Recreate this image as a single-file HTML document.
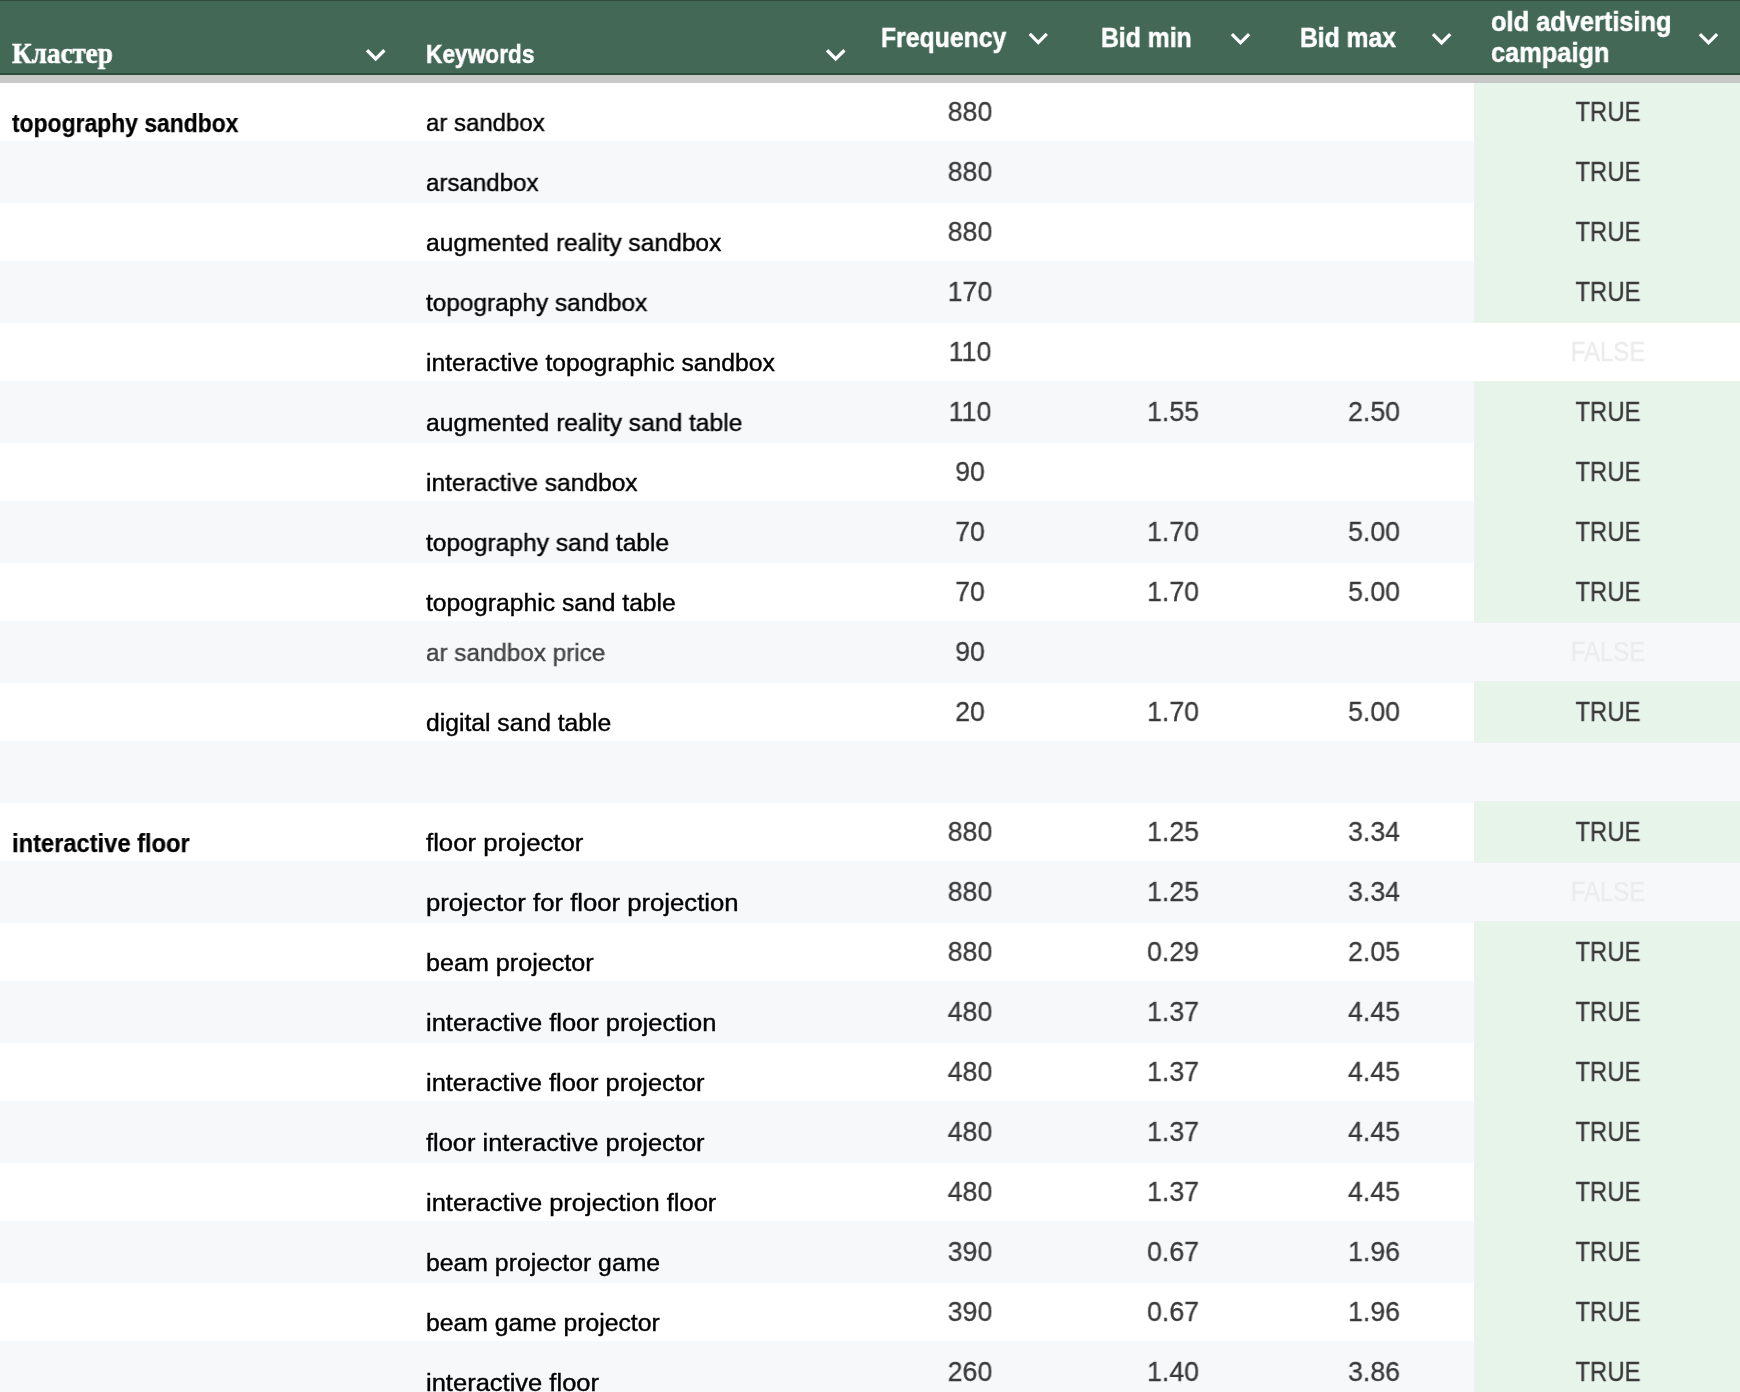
<!DOCTYPE html>
<html><head><meta charset="utf-8"><style>
html,body{margin:0;padding:0;}
body{width:1740px;height:1392px;overflow:hidden;position:relative;background:#fff;font-family:"Liberation Sans",sans-serif;}
.g{position:absolute;left:0;width:1740px;height:62px;background:#f7f8fa;}
.gr{position:absolute;left:1474px;width:266px;height:62px;background:#e6f4ea;}
.t{position:absolute;white-space:pre;line-height:100px;will-change:transform;}
.kw,.cl{color:#000;-webkit-text-stroke:0.4px #000;}
.gray{-webkit-text-stroke:0.4px #434343 !important;}
.cl{font-weight:bold;-webkit-text-stroke:0.25px #000;}
.gray{color:#434343;}
.num{color:#3a3a3a;-webkit-text-stroke:0.3px #3a3a3a;}
.fls{color:#ececec;-webkit-text-stroke:0.4px #ececec;}
.hdr{position:absolute;left:0;top:0;width:1740px;height:83px;background:#c8c8c8;}
.hbg{position:absolute;left:0;top:0;width:1740px;height:75px;background:#436855;border-top:1px solid #2f4c3f;border-bottom:2px solid #2e4c3c;box-sizing:border-box;}
.hs{font-family:"Liberation Serif",serif;font-weight:bold;color:#fff;-webkit-text-stroke:0.6px #fff;}
.hb{font-weight:bold;color:#fff;-webkit-text-stroke:0.5px #fff;}
.ch{position:absolute;}
</style></head><body>
<div class="g" style="top:141px"></div><div class="g" style="top:261px"></div><div class="g" style="top:381px"></div><div class="g" style="top:501px"></div><div class="g" style="top:621px"></div><div class="g" style="top:741px"></div><div class="g" style="top:861px"></div><div class="g" style="top:981px"></div><div class="g" style="top:1101px"></div><div class="g" style="top:1221px"></div><div class="g" style="top:1341px"></div>
<div class="gr" style="top:81px"></div><div class="gr" style="top:141px"></div><div class="gr" style="top:201px"></div><div class="gr" style="top:261px"></div><div class="gr" style="top:381px"></div><div class="gr" style="top:441px"></div><div class="gr" style="top:501px"></div><div class="gr" style="top:561px"></div><div class="gr" style="top:681px"></div><div class="gr" style="top:801px"></div><div class="gr" style="top:921px"></div><div class="gr" style="top:981px"></div><div class="gr" style="top:1041px"></div><div class="gr" style="top:1101px"></div><div class="gr" style="top:1161px"></div><div class="gr" style="top:1221px"></div><div class="gr" style="top:1281px"></div><div class="gr" style="top:1341px"></div>
<div class="t cl" style="left:11.50px;top:72.64px;font-size:25px;transform:scaleX(0.916);transform-origin:0 0;">topography sandbox</div><div class="t kw" style="left:425.60px;top:72.74px;font-size:24.7px;transform:scaleX(0.9721);transform-origin:0 0;">ar sandbox</div><div class="t num" style="left:770.00px;top:61.77px;width:400px;text-align:center;font-size:27.5px;transform:scaleX(0.97);transform-origin:50% 0;">880</div><div class="t num" style="left:1408.00px;top:61.77px;width:400px;text-align:center;font-size:27.5px;transform:scaleX(0.87);transform-origin:50% 0;">TRUE</div><div class="t kw" style="left:425.60px;top:132.74px;font-size:24.7px;transform:scaleX(0.9756);transform-origin:0 0;">arsandbox</div><div class="t num" style="left:770.00px;top:121.77px;width:400px;text-align:center;font-size:27.5px;transform:scaleX(0.97);transform-origin:50% 0;">880</div><div class="t num" style="left:1408.00px;top:121.77px;width:400px;text-align:center;font-size:27.5px;transform:scaleX(0.87);transform-origin:50% 0;">TRUE</div><div class="t kw" style="left:425.60px;top:192.74px;font-size:24.7px;transform:scaleX(0.9966);transform-origin:0 0;">augmented reality sandbox</div><div class="t num" style="left:770.00px;top:181.77px;width:400px;text-align:center;font-size:27.5px;transform:scaleX(0.97);transform-origin:50% 0;">880</div><div class="t num" style="left:1408.00px;top:181.77px;width:400px;text-align:center;font-size:27.5px;transform:scaleX(0.87);transform-origin:50% 0;">TRUE</div><div class="t kw" style="left:425.60px;top:252.74px;font-size:24.7px;transform:scaleX(0.9883);transform-origin:0 0;">topography sandbox</div><div class="t num" style="left:770.00px;top:241.77px;width:400px;text-align:center;font-size:27.5px;transform:scaleX(0.97);transform-origin:50% 0;">170</div><div class="t num" style="left:1408.00px;top:241.77px;width:400px;text-align:center;font-size:27.5px;transform:scaleX(0.87);transform-origin:50% 0;">TRUE</div><div class="t kw" style="left:425.60px;top:312.74px;font-size:24.7px;transform:scaleX(1.0006);transform-origin:0 0;">interactive topographic sandbox</div><div class="t num" style="left:770.00px;top:301.77px;width:400px;text-align:center;font-size:27.5px;transform:scaleX(0.97);transform-origin:50% 0;">110</div><div class="t num fls" style="left:1408.00px;top:301.77px;width:400px;text-align:center;font-size:27.5px;transform:scaleX(0.87);transform-origin:50% 0;">FALSE</div><div class="t kw" style="left:425.60px;top:372.74px;font-size:24.7px;transform:scaleX(0.9982);transform-origin:0 0;">augmented reality sand table</div><div class="t num" style="left:770.00px;top:361.77px;width:400px;text-align:center;font-size:27.5px;transform:scaleX(0.97);transform-origin:50% 0;">110</div><div class="t num" style="left:972.60px;top:361.77px;width:400px;text-align:center;font-size:27.5px;transform:scaleX(0.97);transform-origin:50% 0;">1.55</div><div class="t num" style="left:1173.90px;top:361.77px;width:400px;text-align:center;font-size:27.5px;transform:scaleX(0.97);transform-origin:50% 0;">2.50</div><div class="t num" style="left:1408.00px;top:361.77px;width:400px;text-align:center;font-size:27.5px;transform:scaleX(0.87);transform-origin:50% 0;">TRUE</div><div class="t kw" style="left:425.60px;top:432.74px;font-size:24.7px;transform:scaleX(0.9944);transform-origin:0 0;">interactive sandbox</div><div class="t num" style="left:770.00px;top:421.77px;width:400px;text-align:center;font-size:27.5px;transform:scaleX(0.97);transform-origin:50% 0;">90</div><div class="t num" style="left:1408.00px;top:421.77px;width:400px;text-align:center;font-size:27.5px;transform:scaleX(0.87);transform-origin:50% 0;">TRUE</div><div class="t kw" style="left:425.60px;top:492.74px;font-size:24.7px;transform:scaleX(0.9951);transform-origin:0 0;">topography sand table</div><div class="t num" style="left:770.00px;top:481.77px;width:400px;text-align:center;font-size:27.5px;transform:scaleX(0.97);transform-origin:50% 0;">70</div><div class="t num" style="left:972.60px;top:481.77px;width:400px;text-align:center;font-size:27.5px;transform:scaleX(0.97);transform-origin:50% 0;">1.70</div><div class="t num" style="left:1173.90px;top:481.77px;width:400px;text-align:center;font-size:27.5px;transform:scaleX(0.97);transform-origin:50% 0;">5.00</div><div class="t num" style="left:1408.00px;top:481.77px;width:400px;text-align:center;font-size:27.5px;transform:scaleX(0.87);transform-origin:50% 0;">TRUE</div><div class="t kw" style="left:425.60px;top:552.74px;font-size:24.7px;">topographic sand table</div><div class="t num" style="left:770.00px;top:541.77px;width:400px;text-align:center;font-size:27.5px;transform:scaleX(0.97);transform-origin:50% 0;">70</div><div class="t num" style="left:972.60px;top:541.77px;width:400px;text-align:center;font-size:27.5px;transform:scaleX(0.97);transform-origin:50% 0;">1.70</div><div class="t num" style="left:1173.90px;top:541.77px;width:400px;text-align:center;font-size:27.5px;transform:scaleX(0.97);transform-origin:50% 0;">5.00</div><div class="t num" style="left:1408.00px;top:541.77px;width:400px;text-align:center;font-size:27.5px;transform:scaleX(0.87);transform-origin:50% 0;">TRUE</div><div class="t kw gray" style="left:425.60px;top:602.74px;font-size:24.7px;transform:scaleX(0.9823);transform-origin:0 0;">ar sandbox price</div><div class="t num" style="left:770.00px;top:601.77px;width:400px;text-align:center;font-size:27.5px;transform:scaleX(0.97);transform-origin:50% 0;">90</div><div class="t num fls" style="left:1408.00px;top:601.77px;width:400px;text-align:center;font-size:27.5px;transform:scaleX(0.87);transform-origin:50% 0;">FALSE</div><div class="t kw" style="left:425.60px;top:672.74px;font-size:24.7px;transform:scaleX(0.9978);transform-origin:0 0;">digital sand table</div><div class="t num" style="left:770.00px;top:661.77px;width:400px;text-align:center;font-size:27.5px;transform:scaleX(0.97);transform-origin:50% 0;">20</div><div class="t num" style="left:972.60px;top:661.77px;width:400px;text-align:center;font-size:27.5px;transform:scaleX(0.97);transform-origin:50% 0;">1.70</div><div class="t num" style="left:1173.90px;top:661.77px;width:400px;text-align:center;font-size:27.5px;transform:scaleX(0.97);transform-origin:50% 0;">5.00</div><div class="t num" style="left:1408.00px;top:661.77px;width:400px;text-align:center;font-size:27.5px;transform:scaleX(0.87);transform-origin:50% 0;">TRUE</div><div class="t cl" style="left:11.50px;top:792.64px;font-size:25px;transform:scaleX(0.9477);transform-origin:0 0;">interactive floor</div><div class="t kw" style="left:425.60px;top:792.74px;font-size:24.7px;transform:scaleX(1.0426);transform-origin:0 0;">floor projector</div><div class="t num" style="left:770.00px;top:781.77px;width:400px;text-align:center;font-size:27.5px;transform:scaleX(0.97);transform-origin:50% 0;">880</div><div class="t num" style="left:972.60px;top:781.77px;width:400px;text-align:center;font-size:27.5px;transform:scaleX(0.97);transform-origin:50% 0;">1.25</div><div class="t num" style="left:1173.90px;top:781.77px;width:400px;text-align:center;font-size:27.5px;transform:scaleX(0.97);transform-origin:50% 0;">3.34</div><div class="t num" style="left:1408.00px;top:781.77px;width:400px;text-align:center;font-size:27.5px;transform:scaleX(0.87);transform-origin:50% 0;">TRUE</div><div class="t kw" style="left:425.60px;top:852.74px;font-size:24.7px;transform:scaleX(1.0401);transform-origin:0 0;">projector for floor projection</div><div class="t num" style="left:770.00px;top:841.77px;width:400px;text-align:center;font-size:27.5px;transform:scaleX(0.97);transform-origin:50% 0;">880</div><div class="t num" style="left:972.60px;top:841.77px;width:400px;text-align:center;font-size:27.5px;transform:scaleX(0.97);transform-origin:50% 0;">1.25</div><div class="t num" style="left:1173.90px;top:841.77px;width:400px;text-align:center;font-size:27.5px;transform:scaleX(0.97);transform-origin:50% 0;">3.34</div><div class="t num fls" style="left:1408.00px;top:841.77px;width:400px;text-align:center;font-size:27.5px;transform:scaleX(0.87);transform-origin:50% 0;">FALSE</div><div class="t kw" style="left:425.60px;top:912.74px;font-size:24.7px;transform:scaleX(1.0182);transform-origin:0 0;">beam projector</div><div class="t num" style="left:770.00px;top:901.77px;width:400px;text-align:center;font-size:27.5px;transform:scaleX(0.97);transform-origin:50% 0;">880</div><div class="t num" style="left:972.60px;top:901.77px;width:400px;text-align:center;font-size:27.5px;transform:scaleX(0.97);transform-origin:50% 0;">0.29</div><div class="t num" style="left:1173.90px;top:901.77px;width:400px;text-align:center;font-size:27.5px;transform:scaleX(0.97);transform-origin:50% 0;">2.05</div><div class="t num" style="left:1408.00px;top:901.77px;width:400px;text-align:center;font-size:27.5px;transform:scaleX(0.87);transform-origin:50% 0;">TRUE</div><div class="t kw" style="left:425.60px;top:972.74px;font-size:24.7px;transform:scaleX(1.0321);transform-origin:0 0;">interactive floor projection</div><div class="t num" style="left:770.00px;top:961.77px;width:400px;text-align:center;font-size:27.5px;transform:scaleX(0.97);transform-origin:50% 0;">480</div><div class="t num" style="left:972.60px;top:961.77px;width:400px;text-align:center;font-size:27.5px;transform:scaleX(0.97);transform-origin:50% 0;">1.37</div><div class="t num" style="left:1173.90px;top:961.77px;width:400px;text-align:center;font-size:27.5px;transform:scaleX(0.97);transform-origin:50% 0;">4.45</div><div class="t num" style="left:1408.00px;top:961.77px;width:400px;text-align:center;font-size:27.5px;transform:scaleX(0.87);transform-origin:50% 0;">TRUE</div><div class="t kw" style="left:425.60px;top:1032.74px;font-size:24.7px;transform:scaleX(1.0303);transform-origin:0 0;">interactive floor projector</div><div class="t num" style="left:770.00px;top:1021.77px;width:400px;text-align:center;font-size:27.5px;transform:scaleX(0.97);transform-origin:50% 0;">480</div><div class="t num" style="left:972.60px;top:1021.77px;width:400px;text-align:center;font-size:27.5px;transform:scaleX(0.97);transform-origin:50% 0;">1.37</div><div class="t num" style="left:1173.90px;top:1021.77px;width:400px;text-align:center;font-size:27.5px;transform:scaleX(0.97);transform-origin:50% 0;">4.45</div><div class="t num" style="left:1408.00px;top:1021.77px;width:400px;text-align:center;font-size:27.5px;transform:scaleX(0.87);transform-origin:50% 0;">TRUE</div><div class="t kw" style="left:425.60px;top:1092.74px;font-size:24.7px;transform:scaleX(1.0303);transform-origin:0 0;">floor interactive projector</div><div class="t num" style="left:770.00px;top:1081.77px;width:400px;text-align:center;font-size:27.5px;transform:scaleX(0.97);transform-origin:50% 0;">480</div><div class="t num" style="left:972.60px;top:1081.77px;width:400px;text-align:center;font-size:27.5px;transform:scaleX(0.97);transform-origin:50% 0;">1.37</div><div class="t num" style="left:1173.90px;top:1081.77px;width:400px;text-align:center;font-size:27.5px;transform:scaleX(0.97);transform-origin:50% 0;">4.45</div><div class="t num" style="left:1408.00px;top:1081.77px;width:400px;text-align:center;font-size:27.5px;transform:scaleX(0.87);transform-origin:50% 0;">TRUE</div><div class="t kw" style="left:425.60px;top:1152.74px;font-size:24.7px;transform:scaleX(1.032);transform-origin:0 0;">interactive projection floor</div><div class="t num" style="left:770.00px;top:1141.77px;width:400px;text-align:center;font-size:27.5px;transform:scaleX(0.97);transform-origin:50% 0;">480</div><div class="t num" style="left:972.60px;top:1141.77px;width:400px;text-align:center;font-size:27.5px;transform:scaleX(0.97);transform-origin:50% 0;">1.37</div><div class="t num" style="left:1173.90px;top:1141.77px;width:400px;text-align:center;font-size:27.5px;transform:scaleX(0.97);transform-origin:50% 0;">4.45</div><div class="t num" style="left:1408.00px;top:1141.77px;width:400px;text-align:center;font-size:27.5px;transform:scaleX(0.87);transform-origin:50% 0;">TRUE</div><div class="t kw" style="left:425.60px;top:1212.74px;font-size:24.7px;transform:scaleX(1.0035);transform-origin:0 0;">beam projector game</div><div class="t num" style="left:770.00px;top:1201.77px;width:400px;text-align:center;font-size:27.5px;transform:scaleX(0.97);transform-origin:50% 0;">390</div><div class="t num" style="left:972.60px;top:1201.77px;width:400px;text-align:center;font-size:27.5px;transform:scaleX(0.97);transform-origin:50% 0;">0.67</div><div class="t num" style="left:1173.90px;top:1201.77px;width:400px;text-align:center;font-size:27.5px;transform:scaleX(0.97);transform-origin:50% 0;">1.96</div><div class="t num" style="left:1408.00px;top:1201.77px;width:400px;text-align:center;font-size:27.5px;transform:scaleX(0.87);transform-origin:50% 0;">TRUE</div><div class="t kw" style="left:425.60px;top:1272.74px;font-size:24.7px;transform:scaleX(1.0018);transform-origin:0 0;">beam game projector</div><div class="t num" style="left:770.00px;top:1261.77px;width:400px;text-align:center;font-size:27.5px;transform:scaleX(0.97);transform-origin:50% 0;">390</div><div class="t num" style="left:972.60px;top:1261.77px;width:400px;text-align:center;font-size:27.5px;transform:scaleX(0.97);transform-origin:50% 0;">0.67</div><div class="t num" style="left:1173.90px;top:1261.77px;width:400px;text-align:center;font-size:27.5px;transform:scaleX(0.97);transform-origin:50% 0;">1.96</div><div class="t num" style="left:1408.00px;top:1261.77px;width:400px;text-align:center;font-size:27.5px;transform:scaleX(0.87);transform-origin:50% 0;">TRUE</div><div class="t kw" style="left:425.60px;top:1332.74px;font-size:24.7px;transform:scaleX(1.0335);transform-origin:0 0;">interactive floor</div><div class="t num" style="left:770.00px;top:1321.77px;width:400px;text-align:center;font-size:27.5px;transform:scaleX(0.97);transform-origin:50% 0;">260</div><div class="t num" style="left:972.60px;top:1321.77px;width:400px;text-align:center;font-size:27.5px;transform:scaleX(0.97);transform-origin:50% 0;">1.40</div><div class="t num" style="left:1173.90px;top:1321.77px;width:400px;text-align:center;font-size:27.5px;transform:scaleX(0.97);transform-origin:50% 0;">3.86</div><div class="t num" style="left:1408.00px;top:1321.77px;width:400px;text-align:center;font-size:27.5px;transform:scaleX(0.87);transform-origin:50% 0;">TRUE</div>
<div class="hdr"><div class="hbg"></div></div>
<div class="t hs" style="left:11.60px;top:3.78px;font-size:28.5px;transform:scaleX(0.95);transform-origin:0 0;">Кластер</div><div class="t hb" style="left:425.60px;top:4.06px;font-size:25.5px;transform:scaleX(0.89);transform-origin:0 0;">Keywords</div><div class="t hb" style="left:881.30px;top:-12.13px;font-size:27.5px;transform:scaleX(0.901);transform-origin:0 0;">Frequency</div><div class="t hb" style="left:1100.60px;top:-12.13px;font-size:27.5px;transform:scaleX(0.899);transform-origin:0 0;">Bid min</div><div class="t hb" style="left:1299.80px;top:-12.13px;font-size:27.5px;transform:scaleX(0.896);transform-origin:0 0;">Bid max</div><div class="t hb" style="left:1491.40px;top:-28.43px;font-size:27.5px;transform:scaleX(0.923);transform-origin:0 0;">old advertising</div><div class="t hb" style="left:1491.40px;top:3.47px;font-size:27.5px;transform:scaleX(0.923);transform-origin:0 0;">campaign</div><svg class="ch" style="left:356.25px;top:34.50px" width="39.40" height="39.40" viewBox="0 0 24 24"><path fill="#fff" d="M16.59 8.59L12 13.17 7.41 8.59 6 10l6 6 6-6z"/></svg><svg class="ch" style="left:816.25px;top:34.50px" width="39.40" height="39.40" viewBox="0 0 24 24"><path fill="#fff" d="M16.59 8.59L12 13.17 7.41 8.59 6 10l6 6 6-6z"/></svg><svg class="ch" style="left:1018.75px;top:18.78px" width="38.60" height="38.60" viewBox="0 0 24 24"><path fill="#fff" d="M16.59 8.59L12 13.17 7.41 8.59 6 10l6 6 6-6z"/></svg><svg class="ch" style="left:1220.65px;top:18.64px" width="39.00" height="39.00" viewBox="0 0 24 24"><path fill="#fff" d="M16.59 8.59L12 13.17 7.41 8.59 6 10l6 6 6-6z"/></svg><svg class="ch" style="left:1422.30px;top:18.57px" width="39.20" height="39.20" viewBox="0 0 24 24"><path fill="#fff" d="M16.59 8.59L12 13.17 7.41 8.59 6 10l6 6 6-6z"/></svg><svg class="ch" style="left:1688.55px;top:18.84px" width="39.00" height="39.00" viewBox="0 0 24 24"><path fill="#fff" d="M16.59 8.59L12 13.17 7.41 8.59 6 10l6 6 6-6z"/></svg>
</body></html>
